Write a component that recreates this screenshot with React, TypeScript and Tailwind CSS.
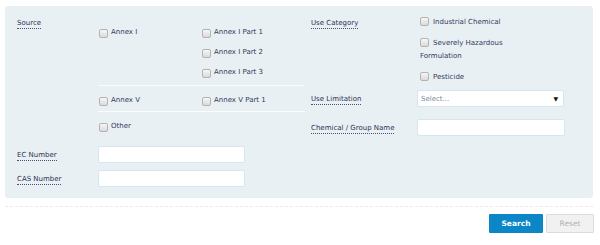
import React from 'react';

const font = { fontFamily: '"DejaVu Sans", Verdana, sans-serif' };

function Box({ inline }: { inline?: boolean }) {
  return (
    <span
      className={
        inline
          ? 'inline-block w-[9px] h-[9px] rounded-[2px] border border-[#b3b3b3] bg-gradient-to-b from-[#f7f7f7] to-[#dadada] align-[-2px] mr-[4px]'
          : 'inline-block w-[9px] h-[9px] shrink-0 rounded-[2px] border border-[#b3b3b3] bg-gradient-to-b from-[#f7f7f7] to-[#dadada] mt-[3px]'
      }
    />
  );
}

function Check({ label }: { label: string }) {
  return (
    <div className="flex items-center h-[20px] gap-[3px] text-[#33385a]">
      <Box />
      <span>{label}</span>
    </div>
  );
}

function Label({ children }: { children: React.ReactNode }) {
  return (
    <span className="text-[#2b3152] border-b border-dotted border-[#4a5070] leading-[11px] pb-[1px]">
      {children}
    </span>
  );
}

export default function App() {
  return (
    <div style={font} className="w-[600px] h-[245px] bg-white pt-[6px] pl-[5px] text-[7px] leading-[12px]">
      <div className="w-[588px] h-[192px] bg-[#e9f0f4] rounded-[3px] pt-[11px] pl-[12px] flex">
        {/* left column */}
        <div className="w-[288px] flex flex-col">
          <div className="flex">
            <div className="w-[81px]">
              <Label>Source</Label>
            </div>
            <div className="w-[207px] pt-[5px]">
              <div className="flex pb-[3px] border-b border-[#f9fbfc]">
                <div className="w-[104px] pl-[1px]">
                  <Check label="Annex I" />
                </div>
                <div>
                  <Check label="Annex I Part 1" />
                  <Check label="Annex I Part 2" />
                  <Check label="Annex I Part 3" />
                </div>
              </div>
              <div className="flex pt-[4px] pb-[1px] border-b border-[#f9fbfc]">
                <div className="w-[104px] pl-[1px]">
                  <Check label="Annex V" />
                </div>
                <Check label="Annex V Part 1" />
              </div>
              <div className="pt-[4px] pl-[1px]">
                <Check label="Other" />
              </div>
            </div>
          </div>
          <div className="flex items-center mt-[10px]">
            <div className="w-[81px]">
              <Label>EC Number</Label>
            </div>
            <input className="w-[147px] h-[17px] bg-white border border-[#d3e6f1] rounded-[2px] outline-none" />
          </div>
          <div className="flex items-center mt-[7px]">
            <div className="w-[81px]">
              <Label>CAS Number</Label>
            </div>
            <input className="w-[147px] h-[17px] bg-white border border-[#d3e6f1] rounded-[2px] outline-none" />
          </div>
        </div>

        {/* right column */}
        <div className="pl-[6px] flex flex-col">
          <div className="flex">
            <div className="w-[106px]">
              <Label>Use Category</Label>
            </div>
            <div className="w-[122px] pl-[3px] -mt-[1px] leading-[13px] text-[#33385a]">
              <div>
                <Box inline />Industrial Chemical
              </div>
              <div className="mt-[8px]">
                <Box inline />Severely Hazardous Formulation
              </div>
              <div className="mt-[8px]">
                <Box inline />Pesticide
              </div>
            </div>
          </div>
          <div className="flex items-center mt-[6px]">
            <div className="w-[106px]">
              <Label>Use Limitation</Label>
            </div>
            <div className="w-[147px] h-[17px] bg-white border border-[#d3e6f1] rounded-[2px] flex items-center justify-between pl-[3px] pr-[5px]">
              <span className="text-[#7d8da0]">Select...</span>
              <span className="text-[6px] text-[#111]">▼</span>
            </div>
          </div>
          <div className="flex items-center mt-[12px]">
            <div className="w-[106px]">
              <Label>Chemical / Group Name</Label>
            </div>
            <input className="w-[148px] h-[17px] bg-white border border-[#d3e6f1] rounded-[2px] outline-none" />
          </div>
        </div>
      </div>

      <div className="w-[588px] mt-[8px] border-t border-dashed border-[#ebebeb]" />

      <div className="w-[589px] mt-[7px] flex justify-end gap-[3px]">
        <button className="w-[54px] h-[19px] bg-[#0b87c7] text-white font-bold text-[7.5px] rounded-[1px]">
          Search
        </button>
        <button className="w-[48px] h-[19px] bg-[#f1f1f1] border border-[#dcdcdc] text-[#b3b3b3] text-[7.5px] rounded-[1px]">
          Reset
        </button>
      </div>
    </div>
  );
}
